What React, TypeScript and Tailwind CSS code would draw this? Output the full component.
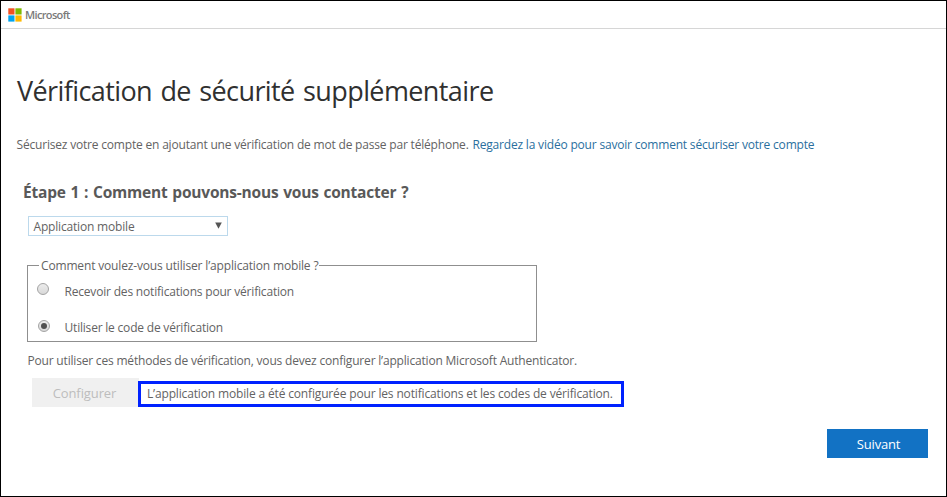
function MicrosoftLogo() {
  return (
    <svg width="14" height="14" viewBox="0 0 14 14" aria-hidden="true">
      <rect x="0.3" y="0.3" width="6.2" height="6.2" fill="#f25022" />
      <rect x="7.4" y="0.3" width="6.2" height="6.2" fill="#7fba00" />
      <rect x="0.3" y="7.4" width="6.2" height="6.2" fill="#00a4ef" />
      <rect x="7.4" y="7.4" width="6.2" height="6.2" fill="#ffb900" />
    </svg>
  );
}

function Radio({ checked = false }: { checked?: boolean }) {
  return (
    <span
      role="radio"
      aria-checked={checked}
      className="flex size-3 items-center justify-center rounded-full border border-[#a3a3a3] bg-linear-to-b from-[#ececec] to-[#d9d9d9]"
    >
      {checked && <span className="size-1.5 rounded-full bg-[#505050]" />}
    </span>
  );
}

export default function App() {
  return (
    <div className="flex h-[497px] w-[947px] flex-col border border-black bg-white font-['Open_Sans','Noto_Sans',sans-serif] text-[12px] leading-5 whitespace-nowrap text-[#636363]">
      <header className="flex h-7 items-center gap-[3px] border-b border-[#d6d6d6] pl-[7px]">
        <MicrosoftLogo />
        <span className="text-[11px] leading-4 font-semibold tracking-[-0.65px] text-[#7a7a7a]">Microsoft</span>
      </header>

      <main className="flex flex-col">
        <h1 className="mt-[42px] ml-4 h-10 text-[27px] leading-10 font-normal tracking-[-0.6px] text-[#303030] [word-spacing:2px]">
          Vérification de sécurité supplémentaire
        </h1>

        <p className="mt-6 ml-[15.5px] flex h-5">
          <span className="w-[456px] tracking-[-0.19px]">
            Sécurisez votre compte en ajoutant une vérification de mot de passe par téléphone.
          </span>
          <a className="tracking-[-0.19px] text-[#2a6f9e]">
            Regardez la vidéo pour savoir comment sécuriser votre compte
          </a>
        </p>

        <h2 className="mt-[25px] ml-[22px] h-6 text-[15.5px] leading-6 font-bold tracking-[-0.21px] text-[#595959] [word-spacing:1px]">
          Étape 1 : Comment pouvons-nous vous contacter ?
        </h2>

        <div className="mt-3 ml-[27px] flex h-5 w-[200px] items-center justify-between border border-[#bcd9ec] pt-px pr-[5px] pl-[4.5px]">
          <span className="tracking-[-0.18px]">Application mobile</span>
          <svg width="7" height="7" viewBox="0 0 7 7" className="mb-0.5" aria-hidden="true">
            <path d="M0.2 0.5h6.6L3.5 6.8z" fill="#555" />
          </svg>
        </div>

        <fieldset className="mt-5 ml-[26px] h-[86px] w-[510px] border border-[#8f8f8f] pl-[9px]">
          <legend className="ml-0.5 h-[19px] pr-px pl-[2px] tracking-[-0.16px]">
            Comment voulez-vous utiliser l’application mobile ?
          </legend>
          <div className="mt-[7px] flex h-5 gap-[15.5px]">
            <span className="mt-px flex">
              <Radio />
            </span>
            <span className="tracking-[-0.19px]">Recevoir des notifications pour vérification</span>
          </div>
          <div className="mt-4 ml-px flex h-5 gap-[14.5px]">
            <span className="mt-0.5 flex">
              <Radio checked />
            </span>
            <span className="tracking-[-0.2px]">Utiliser le code de vérification</span>
          </div>
        </fieldset>

        <p className="mt-[9px] ml-[26.5px] h-5 tracking-[-0.19px]">
          Pour utiliser ces méthodes de vérification, vous devez configurer l’application Microsoft Authenticator.
        </p>

        <div className="mt-[7px] ml-[31px] flex h-[29px] items-end">
          <button className="-mr-px h-[29px] w-[107px] bg-[#f0f0f0] pr-0.5 text-[13px] tracking-[-0.1px] text-[#bdbdbd]">
            Configurer
          </button>
          <div className="flex h-[26px] w-[486px] items-center border-3 border-[#0022ff] bg-white pl-1.5 tracking-[-0.155px]">
            L’application mobile a été configurée pour les notifications et les codes de vérification.
          </div>
        </div>

        <button className="mt-[22px] mr-[18px] h-[29px] w-[101px] self-end bg-[#1272c4] pl-0.5 text-[13px] tracking-[-0.2px] text-white">
          Suivant
        </button>
      </main>
    </div>
  );
}
